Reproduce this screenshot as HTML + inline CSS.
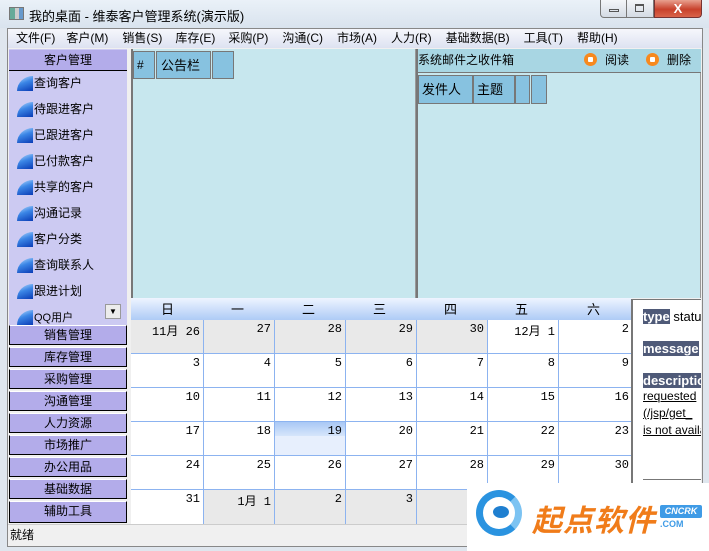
<!DOCTYPE html>
<html><head><meta charset="utf-8"><style>
*{margin:0;padding:0;box-sizing:border-box}
body{width:709px;height:551px;overflow:hidden;background:#dfe6ee;font-family:"Liberation Sans","Noto Sans CJK SC",sans-serif;font-size:12px;color:#000;position:relative}
.a{position:absolute}
.cal{font-family:"Liberation Mono","Noto Sans CJK SC",monospace;font-size:12px}
.ico{position:absolute;left:17px;width:16px;height:15px;border-top-left-radius:100% 100%;background:linear-gradient(160deg,#bfe0ff 0%,#3b86e6 45%,#0a3cb5 100%)}
.item{position:absolute;left:34px;font-size:12px}
.btn{position:absolute;left:9px;width:118px;height:20px;background:#b3acea;border:1px solid #000;border-top:1px solid #fff;text-align:center;line-height:19px;font-size:12px}
.o{display:inline-block;width:13px;height:13px;border-radius:50%;background:#f7891e;vertical-align:-2px;margin-right:8px;position:relative}
.o:after{content:"";position:absolute;left:4px;top:4px;width:5px;height:5px;background:#fff;border-radius:1px}
.hl{background:#4f5a78;color:#fff;font-weight:bold}
</style></head><body>
<div class="a" style="left:0;top:0;width:709px;height:28px;background:linear-gradient(#eaf1f8,#d9e3ee)"></div>
<div class="a" style="left:9px;top:7px;width:15px;height:13px;background:linear-gradient(90deg,#6a9 0 40%,#ccc 40% 70%,#69c 70%);border:1px solid #777"></div>
<div class="a" style="left:29px;top:6px;font-size:13px">我的桌面 - 维泰客户管理系统(演示版)</div>
<div class="a" style="left:600px;top:0;width:27px;height:18px;border:1px solid #777;border-top:0;border-radius:0 0 0 4px;background:linear-gradient(#f4f6f9,#d4dbe4)"><div class="a" style="left:8px;top:9px;width:10px;height:3px;border:1px solid #555"></div></div>
<div class="a" style="left:627px;top:0;width:27px;height:18px;border:1px solid #777;border-top:0;border-left:0;background:linear-gradient(#f4f6f9,#d4dbe4)"><div class="a" style="left:8px;top:4px;width:9px;height:8px;border:1px solid #555;border-top-width:2px"></div></div>
<div class="a" style="left:654px;top:0;width:48px;height:18px;border:1px solid #733;border-top:0;border-radius:0 0 4px 0;background:linear-gradient(#e8a08f,#c8412c 55%,#d9634a);color:#fff;font-weight:bold;text-align:center;line-height:17px;font-size:13px">X</div>
<div class="a" style="left:7px;top:28px;width:696px;height:519px;background:#f0f0f0;border:1px solid #888"></div>
<div class="a" style="left:8px;top:29px;width:694px;height:19px;background:linear-gradient(#f6f7fc,#dde2f1);white-space:nowrap;font-size:12px;line-height:19px;padding-left:8px">
<span style="margin-right:11px">文件(F)</span><span style="margin-right:14px">客户(M)</span><span style="margin-right:13px">销售(S)</span><span style="margin-right:13px">库存(E)</span><span style="margin-right:14px">采购(P)</span><span style="margin-right:14px">沟通(C)</span><span style="margin-right:14px">市场(A)</span><span style="margin-right:14px">人力(R)</span><span style="margin-right:14px">基础数据(B)</span><span style="margin-right:14px">工具(T)</span><span>帮助(H)</span></div>
<div class="a" style="left:9px;top:49px;width:118px;height:276px;background:#cccaf2"></div>
<div class="a" style="left:9px;top:50px;width:118px;height:21px;background:#b3acea;border-bottom:1px solid #000;text-align:center;line-height:20px">客户管理</div>
<div class="ico" style="top:76px"></div><div class="item" style="top:74px">查询客户</div>
<div class="ico" style="top:102px"></div><div class="item" style="top:100px">待跟进客户</div>
<div class="ico" style="top:128px"></div><div class="item" style="top:126px">已跟进客户</div>
<div class="ico" style="top:154px"></div><div class="item" style="top:152px">已付款客户</div>
<div class="ico" style="top:180px"></div><div class="item" style="top:178px">共享的客户</div>
<div class="ico" style="top:206px"></div><div class="item" style="top:204px">沟通记录</div>
<div class="ico" style="top:232px"></div><div class="item" style="top:230px">客户分类</div>
<div class="ico" style="top:258px"></div><div class="item" style="top:256px">查询联系人</div>
<div class="ico" style="top:284px"></div><div class="item" style="top:282px">跟进计划</div>
<div class="ico" style="top:310px"></div><div class="item" style="top:309px;font-size:11px">QQ用户</div>
<div class="a" style="left:105px;top:304px;width:16px;height:15px;background:#ececec;border:1px solid #999;text-align:center;font-size:8px;line-height:13px">▼</div>
<div class="btn" style="top:325px">销售管理</div>
<div class="btn" style="top:347px">库存管理</div>
<div class="btn" style="top:369px">采购管理</div>
<div class="btn" style="top:391px">沟通管理</div>
<div class="btn" style="top:413px">人力资源</div>
<div class="btn" style="top:435px">市场推广</div>
<div class="btn" style="top:457px">办公用品</div>
<div class="btn" style="top:479px">基础数据</div>
<div class="btn" style="top:501px;height:22px">辅助工具</div>
<div class="a" style="left:131px;top:49px;width:285px;height:249px;background:#c7e7ee;border-left:2px solid #777;border-right:1px solid #999"></div>
<div class="a" style="left:133px;top:51px;width:22px;height:28px;background:#87c2e0;border:1px solid #777;line-height:27px;padding-left:3px">#</div>
<div class="a" style="left:156px;top:51px;width:55px;height:28px;background:#87c2e0;border:1px solid #777;line-height:27px;padding-left:4px;font-size:13px">公告栏</div>
<div class="a" style="left:212px;top:51px;width:22px;height:28px;background:#87c2e0;border:1px solid #777"></div>
<div class="a" style="left:416px;top:49px;width:285px;height:249px;background:#c7e7ee;border-left:2px solid #777;border-right:1px solid #999"></div>
<div class="a" style="left:418px;top:49px;width:283px;height:24px;background:#a8d6e3;border-bottom:1px solid #777;line-height:22px;font-size:12px">系统邮件之收件箱<span class="a" style="left:166px;top:0"><span class="o"></span>阅读</span><span class="a" style="left:228px;top:0"><span class="o"></span>删除</span></div>
<div class="a" style="left:418px;top:75px;width:55px;height:29px;background:#87c2e0;border:1px solid #777;line-height:28px;padding-left:3px;font-size:13px">发件人</div>
<div class="a" style="left:473px;top:75px;width:42px;height:29px;background:#87c2e0;border:1px solid #777;line-height:28px;padding-left:3px;font-size:13px">主题</div>
<div class="a" style="left:515px;top:75px;width:15px;height:29px;background:#87c2e0;border:1px solid #777"></div>
<div class="a" style="left:531px;top:75px;width:16px;height:29px;background:#87c2e0;border:1px solid #777"></div>
<div class="a cal" style="left:131px;top:298px;width:501px;height:226px;background:#fff">
<div style="position:absolute;left:0;top:0;width:501px;height:22px;background:linear-gradient(#eef4ff,#aecbf6);font-size:13px">
<span class="a" style="left:30px;top:1px">日</span><span class="a" style="left:100px;top:1px">一</span><span class="a" style="left:171px;top:1px">二</span><span class="a" style="left:242px;top:1px">三</span><span class="a" style="left:313px;top:1px">四</span><span class="a" style="left:384px;top:1px">五</span><span class="a" style="left:456px;top:1px">六</span></div>
<div id="g"></div>
</div>
<script>
var cols=[0,72,143,214,285,356,427,501],rows=[22,55,89,123,157,191,226];
var d=[["11月 26","27","28","29","30","12月 1","2"],["3","4","5","6","7","8","9"],["10","11","12","13","14","15","16"],["17","18","19","20","21","22","23"],["24","25","26","27","28","29","30"],["31","1月 1","2","3","","",""]];
var grey=[[0,1,2,3,4],[],[],[],[],[1,2,3,4,5,6]];
var h="";
for(var r=0;r<6;r++)for(var c=0;c<7;c++){
var bg=grey[r].indexOf(c)>=0?"#e9e9e9":"#fff";
if(r==3&&c==2)bg="linear-gradient(#a9c8f5 0,#d6e5fb 14px,#e7effd 14px)";
h+='<div style="position:absolute;left:'+cols[c]+'px;top:'+rows[r]+'px;width:'+(cols[c+1]-cols[c])+'px;height:'+(rows[r+1]-rows[r])+'px;background:'+bg+';border-left:'+(c?'1px solid #8cb3f0':'0')+';border-top:'+(r?'1px solid #8cb3f0':'0')+';text-align:right;padding:2px 3px 0 0">'+d[r][c]+'</div>';}
document.getElementById("g").innerHTML=h;
</script>
<div class="a" style="left:631px;top:299px;width:70px;height:226px;background:#fff;border-left:2px solid #777;border-top:1px solid #777;overflow:hidden;white-space:nowrap;font-size:12px;padding-left:10px">
<div style="margin-top:9px;font-size:13px"><span class="hl">type</span> statu</div>
<div style="margin-top:17px;font-size:13px"><span class="hl">message</span> /</div>
<div style="margin-top:17px;font-size:13px"><span class="hl">descriptio</span></div>
<div style="text-decoration:underline;line-height:17px">requested<br>(/jsp/get_<br>is not availa</div>
<div style="margin-top:40px;border-top:1px solid #777;width:60px"></div>
</div>
<div class="a" style="left:8px;top:524px;width:694px;height:22px;background:#f0f0f0;border-top:1px solid #ccc;line-height:21px;padding-left:2px">就绪</div>
<div class="a" style="left:467px;top:483px;width:242px;height:68px;background:#fff"></div>
<div class="a" style="left:476px;top:490px;width:46px;height:46px;border-radius:50%;border:7px solid #2a93e0;border-right-color:#7cc3f2"></div>
<div class="a" style="left:493px;top:506px;width:16px;height:12px;border-radius:50%;background:#1f7fd0"></div>
<div class="a" style="left:532px;top:496px;font-size:30px;font-weight:bold;color:#f07c1a;font-style:italic;letter-spacing:1px">起点软件</div>
<div class="a" style="left:660px;top:505px;width:42px;height:13px;background:#3f9be6;color:#fff;font-size:9px;font-weight:bold;font-style:italic;text-align:center;line-height:13px;border-radius:2px">CNCRK</div>
<div class="a" style="left:660px;top:519px;color:#3f9be6;font-size:9px;font-weight:bold">.COM</div>
</body></html>
